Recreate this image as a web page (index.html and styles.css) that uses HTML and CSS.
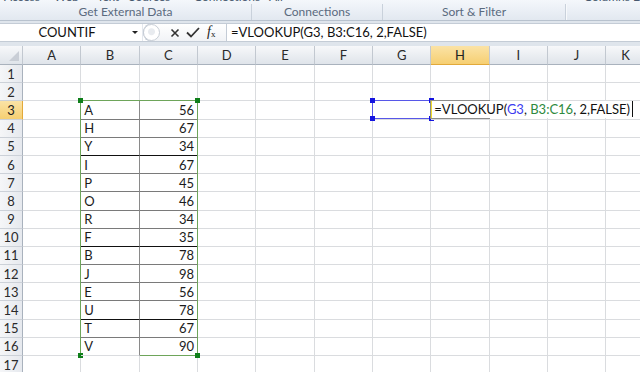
FILE: index.html
```html
<!DOCTYPE html>
<html lang="en">

<head>
    <meta charset="UTF-8">
    <title>VLOOKUP</title>
    <link rel="stylesheet" href="styles.css">
</head>

<body>
    <div class="ribbon">
        <div class="ribbonTop">
            <div class="ribbonTopInner">
                <span style="width:50px">Access</span><span style="width:43px">Web</span><span style="width:32px">Text</span><span style="width:65px">Sources</span><span style="width:75px">Connections</span><span style="width:315px">All</span><span>Columns Dup</span>
            </div>
        </div>
        <div class="groups">
            <div class="group g1">Get External Data</div>
            <div class="group g2">Connections</div>
            <div class="group g3">Sort &amp; Filter</div>
            <div class="group g4"></div>
        </div>
    </div>

    <div class="formulaWrap">
        <div class="formulaBar">
            <div class="nameBox">
                <span class="nameText">COUNTIF</span>
                <span class="nameArrow"></span>
            </div>
            <div class="fxArea">
                <span class="grip"></span>
                <svg class="fxIcon" width="10" height="10" viewBox="0 0 10 10">
                    <path d="M1.5 1.5 L8.5 8.5 M8.5 1.5 L1.5 8.5" stroke="#333" stroke-width="1.6" fill="none" />
                </svg>
                <svg class="fxIcon" width="14" height="11" viewBox="0 0 14 11">
                    <path d="M1 5.5 L5 9.5 L13 1" stroke="#333" stroke-width="1.8" fill="none" />
                </svg>
                <span class="fxLabel"><i>f</i><sub>x</sub></span>
            </div>
            <div class="formulaText">=VLOOKUP(G3, B3:C16, 2,FALSE)</div>
        </div>
    </div>

    <table class="sheet">
        <colgroup>
            <col class="rowHeadCol">
            <col class="col"><col class="col"><col class="col"><col class="col"><col class="col">
            <col class="col"><col class="col"><col class="col"><col class="col"><col class="col">
            <col>
        </colgroup>
        <thead>
            <tr>
                <th class="corner"><span class="cornerMark"></span></th>
                <th>A</th><th>B</th><th>C</th><th>D</th><th>E</th><th>F</th><th>G</th><th class="active">H</th><th>I</th><th>J</th><th>K</th>
            </tr>
        </thead>
        <tbody>
            <tr><th>1</th><td></td><td></td><td></td><td></td><td></td><td></td><td></td><td></td><td></td><td></td><td></td></tr>
            <tr><th>2</th><td></td><td></td><td></td><td></td><td></td><td></td><td></td><td></td><td></td><td></td><td></td></tr>
            <tr>
                <th class="active">3</th><td></td>
                <td class="key">A
                    <div class="rangeBox">
                        <span class="handle green tl"></span><span class="handle green tr"></span>
                        <span class="handle green bl"></span><span class="handle green br"></span>
                    </div>
                </td>
                <td class="val">56</td><td></td><td></td><td></td>
                <td class="refCell">
                    <div class="refBox">
                        <span class="handle blue tl"></span><span class="handle blue tr"></span>
                        <span class="handle blue bl"></span><span class="handle blue br"></span>
                    </div>
                </td>
                <td class="editCell">
                    <div class="editFrame"></div>
                    <div class="editor">=VLOOKUP(<span class="refBlue">G3</span>, <span class="refGreen">B3:C16</span>, 2,FALSE)<span class="caret"></span></div>
                </td>
                <td></td><td></td><td></td>
            </tr>
            <tr><th>4</th><td></td><td class="key">H</td><td class="val">67</td><td></td><td></td><td></td><td></td><td></td><td></td><td></td><td></td></tr>
            <tr><th>5</th><td></td><td class="key dark">Y</td><td class="val dark">34</td><td></td><td></td><td></td><td></td><td></td><td></td><td></td><td></td></tr>
            <tr><th>6</th><td></td><td class="key">I</td><td class="val">67</td><td></td><td></td><td></td><td></td><td></td><td></td><td></td><td></td></tr>
            <tr><th>7</th><td></td><td class="key">P</td><td class="val">45</td><td></td><td></td><td></td><td></td><td></td><td></td><td></td><td></td></tr>
            <tr><th>8</th><td></td><td class="key">O</td><td class="val">46</td><td></td><td></td><td></td><td></td><td></td><td></td><td></td><td></td></tr>
            <tr><th>9</th><td></td><td class="key">R</td><td class="val">34</td><td></td><td></td><td></td><td></td><td></td><td></td><td></td><td></td></tr>
            <tr><th>10</th><td></td><td class="key dark">F</td><td class="val dark">35</td><td></td><td></td><td></td><td></td><td></td><td></td><td></td><td></td></tr>
            <tr><th>11</th><td></td><td class="key">B</td><td class="val">78</td><td></td><td></td><td></td><td></td><td></td><td></td><td></td><td></td></tr>
            <tr><th>12</th><td></td><td class="key">J</td><td class="val">98</td><td></td><td></td><td></td><td></td><td></td><td></td><td></td><td></td></tr>
            <tr><th>13</th><td></td><td class="key">E</td><td class="val">56</td><td></td><td></td><td></td><td></td><td></td><td></td><td></td><td></td></tr>
            <tr><th>14</th><td></td><td class="key dark">U</td><td class="val dark">78</td><td></td><td></td><td></td><td></td><td></td><td></td><td></td><td></td></tr>
            <tr><th>15</th><td></td><td class="key">T</td><td class="val">67</td><td></td><td></td><td></td><td></td><td></td><td></td><td></td><td></td></tr>
            <tr><th>16</th><td></td><td class="key last">V</td><td class="val last">90</td><td></td><td></td><td></td><td></td><td></td><td></td><td></td><td></td></tr>
            <tr><th>17</th><td></td><td></td><td></td><td></td><td></td><td></td><td></td><td></td><td></td><td></td><td></td></tr>
        </tbody>
    </table>
</body>

</html>
```

FILE: styles.css
```css
* {
    margin: 0;
    padding: 0;
    box-sizing: border-box;
}

body {
    width: 640px;
    height: 372px;
    overflow: hidden;
    background-color: #ffffff;
    font-family: Lato, "Liberation Sans", sans-serif;
    font-size: 13px;
    color: #1e1e1e;
}

/* ribbon */
.ribbon {
    height: 21px;
    background: linear-gradient(#f4f7fb, #e2e8f0);
    border-bottom: 1px solid #b8c2ce;
    overflow: hidden;
}

.ribbonTop {
    height: 4px;
    overflow: hidden;
}

.ribbonTopInner {
    display: flex;
    margin-top: -10px;
    padding-left: 4px;
    line-height: 13px;
    font-size: 12px;
    color: #46586e;
}

.ribbonTopInner span {
    flex-shrink: 0;
}

.groups {
    display: flex;
    height: 16px;
}

.group {
    height: 16px;
    line-height: 16px;
    text-align: center;
    font-size: 12px;
    color: #5a6a7e;
    border-right: 1px solid #c9d1db;
}

.g1 {
    width: 252px;
}

.g2 {
    width: 131px;
}

.g3 {
    width: 183px;
}

.g4 {
    flex: 1;
    border-right: none;
    border-left: 1px solid #f7f9fb;
}

/* formula bar */
.formulaWrap {
    background-color: #dfe5ec;
    padding: 2px 0 4px;
}

.formulaBar {
    height: 19px;
    display: flex;
    background-color: #ffffff;
    border-top: 1px solid #c4ccd6;
    border-bottom: 1px solid #c4ccd6;
}

.nameBox {
    width: 143px;
    position: relative;
    line-height: 17px;
    border-right: 1px solid #e4e8ee;
}

.nameText {
    display: block;
    width: 130px;
    padding-left: 4px;
    text-align: center;
    color: #111;
}

.nameArrow {
    position: absolute;
    right: 4px;
    top: 7px;
    border-left: 3px solid transparent;
    border-right: 3px solid transparent;
    border-top: 3px solid #222;
}

.fxArea {
    width: 83px;
    display: flex;
    align-items: center;
    gap: 6px;
    background: linear-gradient(#ffffff, #f1f3f6);
    border: 1px solid #c4ccd6;
    border-right: none;
    border-radius: 9px 0 0 9px;
    margin: -1px 0;
    height: 19px;
}

.grip {
    width: 17px;
    height: 17px;
    border-radius: 50%;
    border: 1px solid #c8ced6;
    background: radial-gradient(circle at 50% 45%, #e8ebef 0 3px, #ffffff 4px);
    margin-left: -1px;
    margin-right: 4px;
}

.fxIcon {
    display: block;
}

.fxLabel {
    font-family: "Liberation Serif", serif;
    font-size: 14px;
    color: #222;
    margin-left: 1px;
    line-height: 17px;
}

.fxLabel sub {
    font-size: 9px;
    vertical-align: -1px;
}

.formulaText {
    flex: 1;
    border-left: 1px solid #c4ccd6;
    padding-left: 4px;
    line-height: 17px;
    white-space: nowrap;
    color: #111;
}

/* sheet */
.sheet {
    border-collapse: separate;
    border-spacing: 0;
    table-layout: fixed;
    width: 646px;
}

.rowHeadCol {
    width: 23px;
}

.col {
    width: 58.33px;
}

.sheet th {
    height: 18.2px;
    font-weight: normal;
    font-size: 13px;
    color: #2a2a2a;
    border-right: 1px solid #c2c8d0;
    border-bottom: 1px solid #c2c8d0;
    text-align: center;
    line-height: 16px;
    padding: 0;
}

.sheet thead th {
    height: 19px;
    background: linear-gradient(#f7f8fa, #dfe4ea);
    border-bottom: 1px solid #a9b2bd;
}

.sheet tbody th {
    background: linear-gradient(90deg, #f5f6f8, #e6e9ee);
    border-right: 1px solid #a9b2bd;
    border-bottom: 1px solid #ccd1d8;
}

.sheet th.active {
    background: linear-gradient(#fbe3a6, #f6cf72);
    color: #222;
}

.sheet thead th.active {
    border-bottom: 1px solid #e2a93a;
}

.sheet tbody th.active {
    border-right: 1px solid #e2a93a;
}

.corner {
    position: relative;
}

.cornerMark {
    position: absolute;
    right: 3px;
    bottom: 3px;
    border-left: 10px solid transparent;
    border-bottom: 10px solid #c9ced6;
}

.sheet td {
    height: 18.2px;
    padding: 0 3px;
    border-right: 1px solid #dadcdf;
    border-bottom: 1px solid #dadcdf;
    white-space: nowrap;
    line-height: 16px;
    color: #1b1b1b;
}

.key {
    position: relative;
    border-right: 1px solid #8a8a8a !important;
    border-bottom: 1px solid #7a7a7a !important;
}

.val {
    text-align: right;
    border-bottom: 1px solid #7a7a7a !important;
}

.key.dark,
.val.dark {
    border-bottom: 1px solid #111 !important;
}

.key.last,
.val.last {
    border-bottom: 1px solid #dadcdf !important;
}

/* range highlights */
.rangeBox {
    position: absolute;
    left: -1px;
    top: -1px;
    width: 118px;
    height: 256px;
    border: 1px solid #6ea55a;
    pointer-events: none;
}

.refCell,
.editCell {
    position: relative;
}

.refBox {
    position: absolute;
    left: -1px;
    top: -1px;
    width: 60px;
    height: 19px;
    border: 1px solid #5757e8;
}

.handle {
    position: absolute;
    width: 5px;
    height: 5px;
}

.handle.green {
    background-color: #0f7f1a;
}

.handle.blue {
    background-color: #1414e0;
}

.tl {
    left: -3px;
    top: -3px;
}

.tr {
    right: -3px;
    top: -3px;
}

.bl {
    left: -3px;
    bottom: -3px;
}

.br {
    right: -3px;
    bottom: -3px;
}

.editFrame {
    position: absolute;
    left: -1px;
    top: -1px;
    width: 60px;
    height: 19px;
    border: 1px solid #8c8c8c;
}

.editor {
    position: absolute;
    left: 0;
    top: 0;
    height: 17px;
    padding-left: 2px;
    background-color: #ffffff;
    border-left: 1px solid #f2dc2a;
    line-height: 16px;
    white-space: nowrap;
    color: #111;
}

.refBlue {
    color: #3c3cf0;
}

.refGreen {
    color: #2e8a3e;
}

.caret {
    display: inline-block;
    width: 1px;
    height: 16px;
    margin-left: 2px;
    vertical-align: top;
    background-color: #111;
}
```
